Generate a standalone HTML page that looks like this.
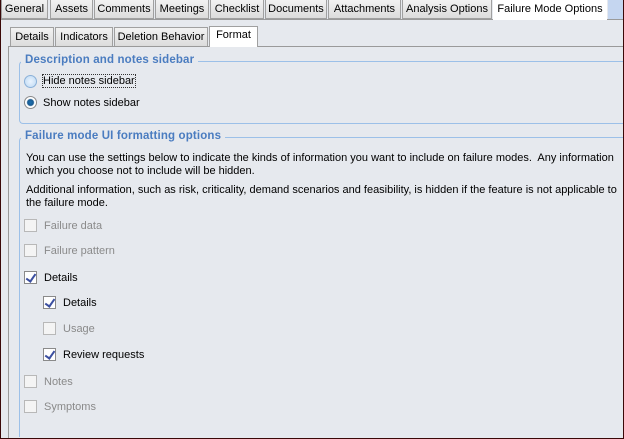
<!DOCTYPE html>
<html><head><style>
*{margin:0;padding:0;box-sizing:border-box}
body{width:624px;height:439px;overflow:hidden;background:#e6e9ee;font-family:"Liberation Sans",sans-serif;font-size:11px;color:#000;position:relative}
.frame{position:absolute;left:0;top:0;width:624px;height:439px;border:1px solid #3a0808;border-top:none}
.a{position:absolute;white-space:nowrap}
.tab{position:absolute;top:0;height:19px;background:linear-gradient(#f2f2f2,#dcdcdc);border:1px solid #a0a0a0;border-top:none;text-align:center;line-height:19px}
.tab.sel{background:#fff;border:none;height:20px;line-height:18px}
.itab{position:absolute;top:27px;height:19px;background:linear-gradient(#f2f2f2,#dcdcdc);border:1px solid #a0a0a0;border-bottom:none;text-align:center;line-height:18px}
.legend{position:absolute;color:#4a7cc0;font-weight:bold;font-size:11.5px;letter-spacing:0.15px;background:#e6e9ee;padding:0 4px}
.cb{position:absolute;width:13px;height:13px;border:1px solid #b8b8b8;background:#f4f4f4}
.cb.on{border-color:#8a8a8a;background:#fff}
.cb.on::after{content:"";position:absolute;left:3px;top:0px;width:4px;height:8px;border:solid #3b4fa0;border-width:0 2px 2px 0;transform:rotate(35deg)}
.gray{color:#8a8a8a}
</style></head><body>
<div class="tab" style="left:1px;width:47px">General</div>
<div class="tab" style="left:50px;width:43px">Assets</div>
<div class="tab" style="left:94px;width:60px">Comments</div>
<div class="tab" style="left:155px;width:54px">Meetings</div>
<div class="tab" style="left:210px;width:54px">Checklist</div>
<div class="tab" style="left:265px;width:62px">Documents</div>
<div class="tab" style="left:328px;width:73px">Attachments</div>
<div class="tab" style="left:402px;width:90px">Analysis Options</div>
<div class="tab sel" style="left:493px;width:114px">Failure Mode Options</div>
<div class="a" style="left:608px;top:0;width:15px;height:19px;background:#c5d6f0"></div>
<div class="a" style="left:1px;top:19px;width:492px;height:1px;background:#9a9a9a"></div>
<div class="a" style="left:607px;top:19px;width:16px;height:1px;background:#9a9a9a"></div>
<div class="itab" style="left:10px;width:44px">Details</div>
<div class="itab" style="left:55px;width:58px">Indicators</div>
<div class="itab" style="left:114px;width:94px">Deletion Behavior</div>
<div class="a" style="left:209px;top:26px;width:49px;height:21px;background:#fff;border:1px solid #a0a0a0;border-bottom:none;text-align:center;line-height:16px">Format</div>
<div class="a" style="left:8px;top:46px;width:201px;height:1px;background:#9a9a9a"></div>
<div class="a" style="left:258px;top:46px;width:365px;height:1px;background:#9a9a9a"></div>
<div class="a" style="left:8px;top:46px;width:1px;height:392px;background:#9a9a9a"></div>

<div class="a" style="left:19px;top:61px;width:605px;height:63px;border:1px solid #9cc0e8;border-right:none;border-radius:4px 0 0 4px"></div>
<div class="legend" style="left:21px;top:54px">Description and notes sidebar</div>
<div class="a" style="left:24px;top:75px;width:13px;height:13px;border-radius:50%;border:1px solid #8ab0d8;background:radial-gradient(#eaf4ff,#bcd8f2)"></div>
<div class="a" style="left:43px;top:75px;outline:1px dotted #333">Hide notes sidebar</div>
<div class="a" style="left:24px;top:96px;width:13px;height:13px;border-radius:50%;border:1px solid #8a8a8a;background:radial-gradient(#1a6fb0 0,#1a5a90 3px,#fff 4px)"></div>
<div class="a" style="left:43px;top:97px">Show notes sidebar</div>

<div class="a" style="left:19px;top:137px;width:605px;height:300px;border:1px solid #9cc0e8;border-right:none;border-bottom:none;border-radius:4px 0 0 0"></div>
<div class="legend" style="left:21px;top:130px">Failure mode UI formatting options</div>
<div class="a" style="left:26px;top:152px;line-height:13px">You can use the settings below to indicate the kinds of information you want to include on failure modes.&nbsp; Any information<br>which you choose not to include will be hidden.</div>
<div class="a" style="left:26px;top:184px;line-height:13px">Additional information, such as risk, criticality, demand scenarios and feasibility, is hidden if the feature is not applicable to<br>the failure mode.</div>

<div class="cb" style="left:24px;top:219px"></div><div class="a gray" style="left:44px;top:220px">Failure data</div>
<div class="cb" style="left:24px;top:244px"></div><div class="a gray" style="left:44px;top:245px">Failure pattern</div>
<div class="cb on" style="left:24px;top:271px"></div><div class="a" style="left:44px;top:272px">Details</div>
<div class="cb on" style="left:43px;top:296px"></div><div class="a" style="left:63px;top:297px">Details</div>
<div class="cb" style="left:43px;top:322px"></div><div class="a gray" style="left:63px;top:323px">Usage</div>
<div class="cb on" style="left:43px;top:348px"></div><div class="a" style="left:63px;top:349px">Review requests</div>
<div class="cb" style="left:24px;top:375px"></div><div class="a gray" style="left:44px;top:376px">Notes</div>
<div class="cb" style="left:24px;top:400px"></div><div class="a gray" style="left:44px;top:401px">Symptoms</div>
<div class="frame"></div>
</body></html>
